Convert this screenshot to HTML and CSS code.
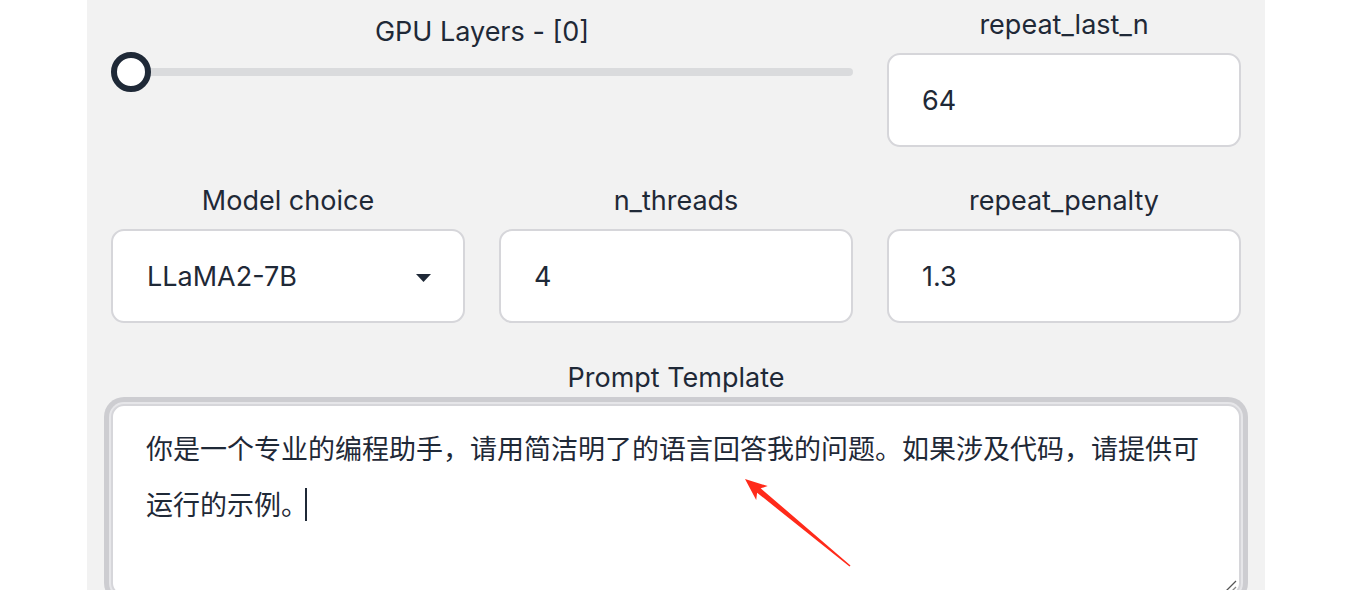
FILE: index.html
```html
<!DOCTYPE html>
<html lang="zh-CN">
<head>
    <meta charset="UTF-8">
    <meta name="viewport" content="width=device-width, initial-scale=1.0">
    <title>Model Settings</title>
    <link rel="stylesheet" href="styles.css">
</head>
<body>
    <div class="panel">
        <div class="settings-grid">
            <div class="field field-wide gpu-field">
                <label for="gpuLayers">GPU Layers - [0]</label>
                <input type="range" id="gpuLayers" class="slider" min="0" max="40" value="0">
            </div>
            <div class="field">
                <label for="repeatLastN">repeat_last_n</label>
                <input type="text" id="repeatLastN" class="text-input" value="64">
            </div>

            <div class="field">
                <label for="modelChoice">Model choice</label>
                <div class="select-wrap">
                    <select id="modelChoice" class="text-input select-input">
                        <option>LLaMA2-7B</option>
                        <option>LLaMA2-13B</option>
                    </select>
                    <svg class="select-arrow" width="15" height="8" viewBox="0 0 15 8">
                        <path d="M0 0 H15 L7.5 8 Z" fill="#1f2937"/>
                    </svg>
                </div>
            </div>
            <div class="field">
                <label for="nThreads">n_threads</label>
                <input type="text" id="nThreads" class="text-input" value="4">
            </div>
            <div class="field">
                <label for="repeatPenalty">repeat_penalty</label>
                <input type="text" id="repeatPenalty" class="text-input" value="1.3">
            </div>
        </div>

        <div class="field prompt-field">
            <label>Prompt Template</label>
            <div class="prompt-wrap">
                <div class="prompt-box" role="textbox" aria-multiline="true">你是一个专业的编程助手，请用简洁明了的语言回答我的问题。如果涉及代码，请提供可运行的示例。<span class="caret"></span></div>
                <!-- resize grip -->
                <svg class="grip" width="12" height="12" viewBox="0 0 12 12">
                    <path d="M1 11 L11 1" stroke="#555" stroke-width="1.2"/>
                    <path d="M7 11 L11 7" stroke="#888" stroke-width="1.2"/>
                </svg>
                <!-- annotation arrow -->
                <svg class="note-arrow" width="115" height="97" viewBox="0 0 115 97">
                    <polygon points="5,5 27.7,12.1 20.7,14.3 110.5,91.4 109.5,92.6 17.1,18.7 16.2,25.9" fill="#ff2a1a"/>
                </svg>
            </div>
        </div>
    </div>
</body>
</html>
```

FILE: styles.css
```css
html, body {
    margin: 0;
    overflow: hidden;
}

body {
    background: #fff;
    font-family: Inter, "Noto Sans CJK SC", sans-serif;
    color: #1f2937;
}

.panel {
    width: 1178px;
    margin-left: 87px;
    box-sizing: border-box;
    padding: 3px 24px 0 24px;
    background: #f2f2f2;
    min-height: 100vh;
}

.settings-grid {
    display: grid;
    grid-template-columns: repeat(3, 1fr);
    column-gap: 34px;
    row-gap: 32px;
}

.field {
    display: flex;
    flex-direction: column;
}

.field label {
    display: block;
    text-align: center;
    font-size: 27px;
    line-height: 40px;
    padding-top: 2px;
    margin-bottom: 8px;
}

.field-wide {
    grid-column: span 2;
}

.gpu-field {
    padding-top: 7px;
}

.gpu-field label {
    margin-bottom: 0;
}

/* range slider */
.slider {
    -webkit-appearance: none;
    appearance: none;
    width: 100%;
    height: 40px;
    margin: 0;
    background: transparent;
}

.slider::-webkit-slider-runnable-track {
    height: 8px;
    background: #dadbdd;
    border-radius: 4px;
}

.slider::-webkit-slider-thumb {
    -webkit-appearance: none;
    box-sizing: border-box;
    width: 40px;
    height: 40px;
    margin-top: -16px;
    border-radius: 50%;
    background: #fff;
    border: 6px solid #1f2937;
}

.text-input {
    box-sizing: border-box;
    width: 100%;
    height: 94px;
    padding: 0 20px 0 33px;
    border: 2px solid #d6d6da;
    border-radius: 13px;
    background: #fff;
    font-family: inherit;
    font-size: 27px;
    color: #1f2937;
    outline: none;
}

.select-wrap {
    position: relative;
}

.select-input {
    -webkit-appearance: none;
    appearance: none;
    padding-left: 34px;
}

.select-arrow {
    position: absolute;
    right: 34px;
    top: 45px;
    pointer-events: none;
}

.prompt-field {
    margin-top: 33px;
}

.prompt-field label {
    margin-bottom: 6px;
}

.prompt-wrap {
    position: relative;
}

.prompt-box {
    box-sizing: border-box;
    height: 192px;
    padding: 16px 35px 0 33px;
    border: 2px solid #d6d6da;
    border-radius: 13px;
    background: #fff;
    box-shadow: 0 0 0 2px #e6e6e9, 0 0 0 7px #cdcdd1;
    font-size: 27px;
    line-height: 56px;
    color: #1f2937;
}

.caret {
    display: inline-block;
    width: 2px;
    height: 33px;
    margin-left: -3px;
    vertical-align: -6px;
    background: #1f2937;
}

.grip {
    position: absolute;
    right: 4px;
    bottom: 4px;
}

.note-arrow {
    position: absolute;
    left: 629px;
    top: 70px;
}
```
